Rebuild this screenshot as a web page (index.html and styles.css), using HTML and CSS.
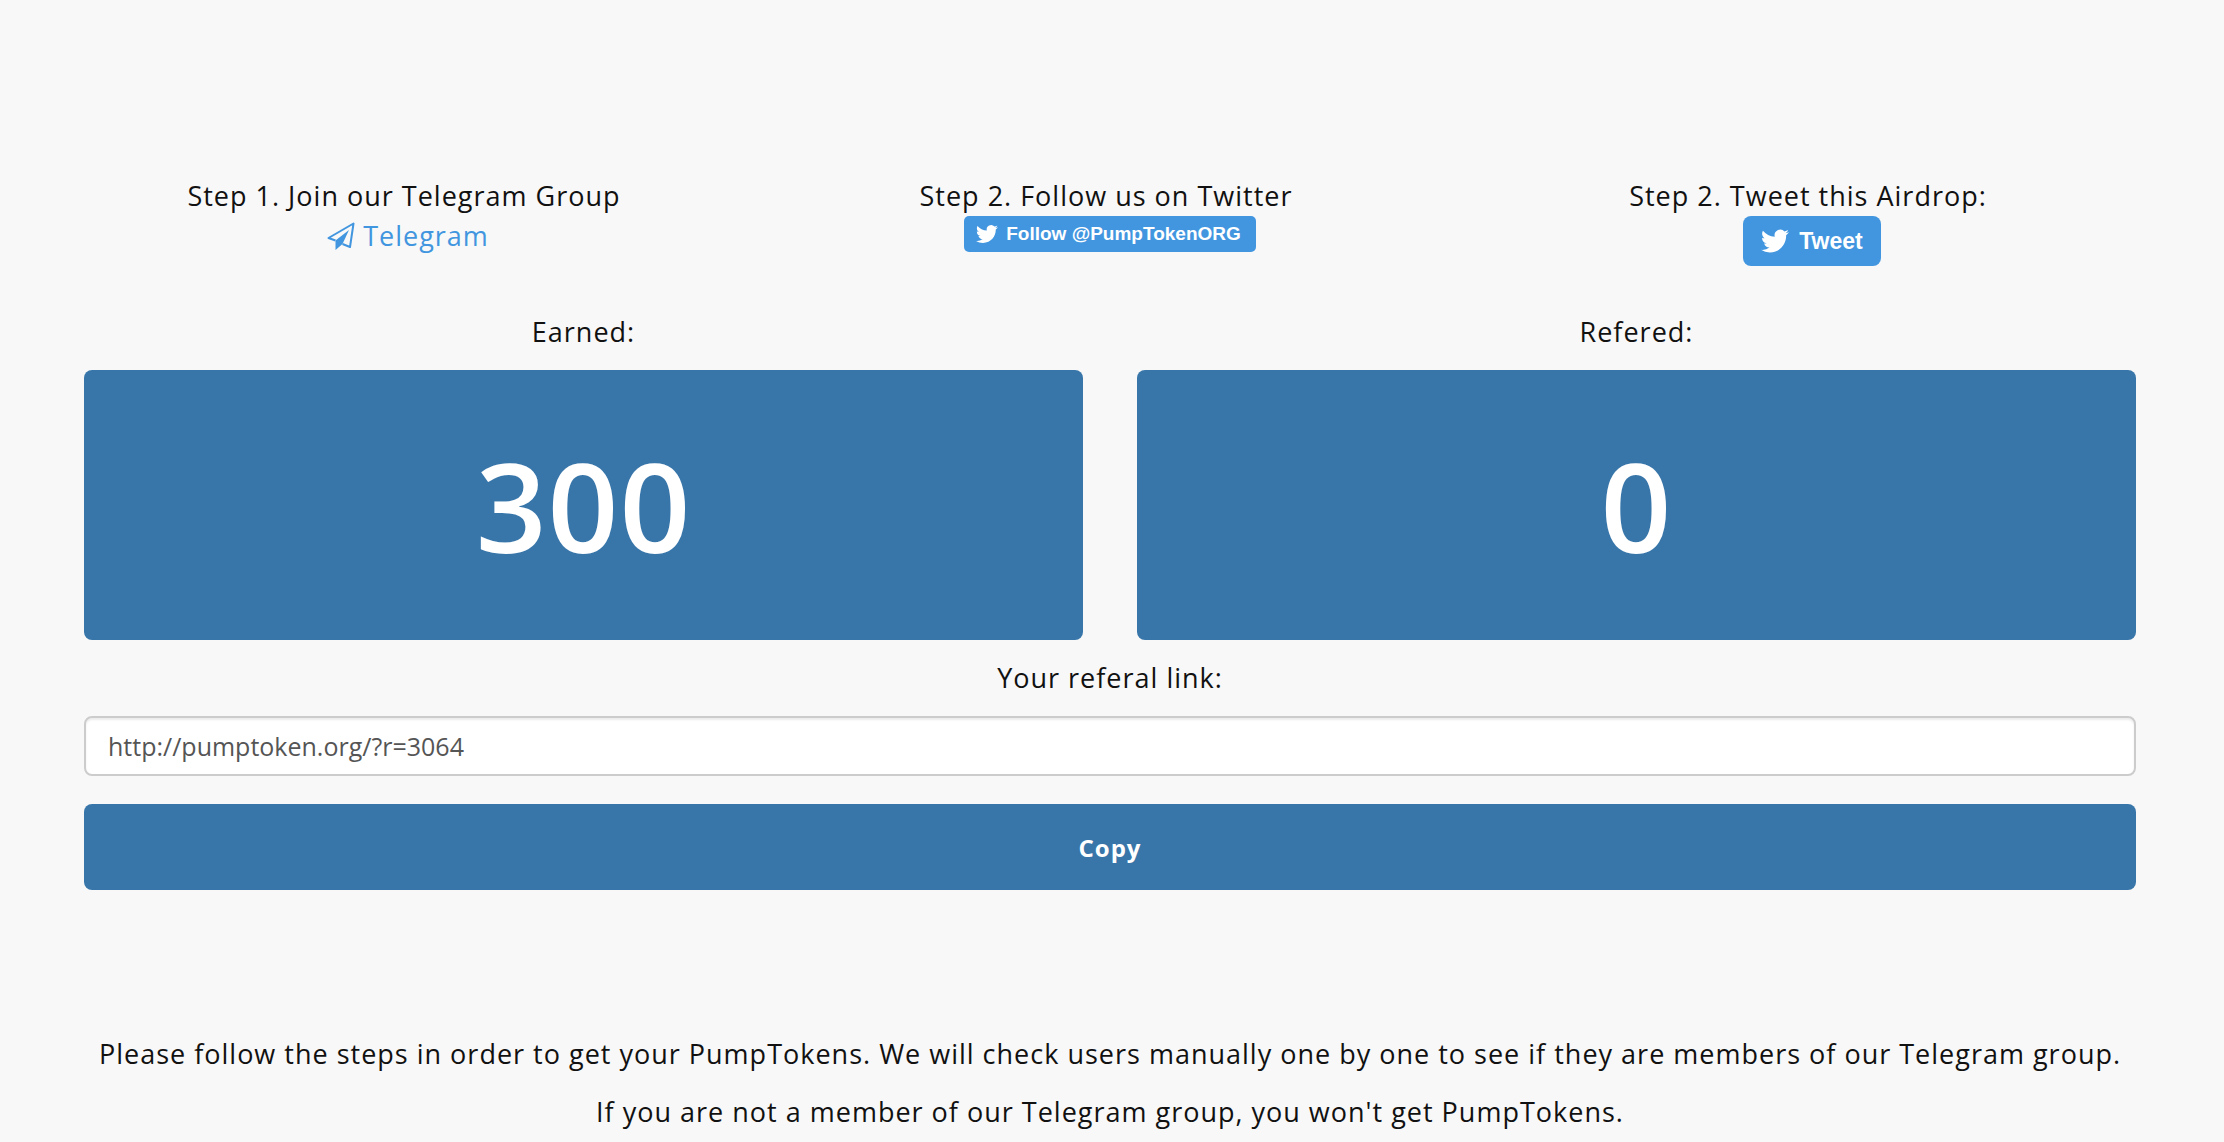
FILE: index.html
```html
<!DOCTYPE html>
<html lang="en">
<head>
    <meta charset="UTF-8">
    <meta name="viewport" content="width=device-width, initial-scale=1.0">
    <title>PumpToken Airdrop</title>
    <link rel="stylesheet" href="styles.css">
</head>
<body>
    <!-- Twitter bird, shared by both buttons -->
    <svg class="sprite" aria-hidden="true">
        <symbol id="bird" viewBox="0 0 24 24">
            <path d="M23.95 4.57a10 10 0 0 1-2.82.77 4.96 4.96 0 0 0 2.16-2.72c-.95.55-2 .96-3.13 1.18a4.92 4.92 0 0 0-8.38 4.48C7.69 8.1 4.07 6.13 1.64 3.16a4.82 4.82 0 0 0-.67 2.48c0 1.71.87 3.21 2.19 4.1a4.9 4.9 0 0 1-2.23-.62v.06a4.92 4.92 0 0 0 3.95 4.83 4.99 4.99 0 0 1-2.21.08 4.94 4.94 0 0 0 4.6 3.42A9.87 9.87 0 0 1 0 19.54a13.99 13.99 0 0 0 7.55 2.21c9.05 0 14-7.5 14-13.98 0-.21 0-.42-.02-.63a9.94 9.94 0 0 0 2.46-2.55z"/>
        </symbol>
    </svg>

    <main class="container">
        <div class="steps">
            <div class="step">
                <p class="step-title">Step 1. Join our Telegram Group</p>
                <a class="telegram-link" href="#">
                    <svg class="plane" viewBox="0 0 28 28" aria-hidden="true">
                        <path class="plane-outline" d="M8.500 18.500 1.500 16 26.500 1.500 23 25 15.500 22"/>
                        <path class="plane-fill" d="M22 8 8.500 18.500V28l7-6z"/>
                    </svg>
                    Telegram
                </a>
            </div>
            <div class="step">
                <p class="step-title">Step 2. Follow us on Twitter</p>
                <a class="twitter-btn" href="#">
                    <svg class="bird" viewBox="0 0 24 24" aria-hidden="true"><use href="#bird"/></svg>
                    Follow @PumpTokenORG
                </a>
            </div>
            <div class="step">
                <p class="step-title">Step 2. Tweet this Airdrop:</p>
                <a class="twitter-btn twitter-btn-large" href="#">
                    <svg class="bird" viewBox="0 0 24 24" aria-hidden="true"><use href="#bird"/></svg>
                    Tweet
                </a>
            </div>
        </div>

        <div class="stats">
            <div class="stat">
                <p>Earned:</p>
                <div class="stat-box">300</div>
            </div>
            <div class="stat">
                <p>Refered:</p>
                <div class="stat-box">0</div>
            </div>
        </div>

        <div class="referral">
            <label for="link">Your referal link:</label>
            <input type="text" id="link" value="http://pumptoken.org/?r=3064">
            <button type="button" id="copy">Copy</button>
        </div>

        <div class="notes">
            <p>Please follow the steps in order to get your PumpTokens. We will check users manually one by one to see if they are members of our Telegram group.</p>
            <p>If you are not a member of our Telegram group, you won't get PumpTokens.</p>
        </div>
    </main>

    <script>
        document.getElementById('copy').addEventListener('click', function () {
            document.getElementById('link').select();
            document.execCommand('copy');
        });
    </script>
</body>
</html>
```
FILE: styles.css
```css
:root {
    --primary: #3876aa;
    --twitter: #4296df;
    --background: #f8f8f8;
}

* {
    margin: 0;
    padding: 0;
    box-sizing: border-box;
}

body {
    font-family: "Open Sans", "Noto Sans", sans-serif;
    font-size: 27px;
    line-height: 40px;
    letter-spacing: 1px;
    color: #111111;
    background: var(--background);
    text-align: center;
}

.sprite {
    display: none;
}

.container {
    padding: 176px 88px 10px 84px;
}

.steps {
    display: grid;
    grid-template-columns: repeat(3, 1fr);
    gap: 54px;
    margin-bottom: 46px;
}

.step {
    display: flex;
    flex-direction: column;
    align-items: center;
}

.step-title {
    padding-right: 8px;
}

.telegram-link {
    display: flex;
    align-items: center;
    gap: 8px;
    color: var(--twitter);
    text-decoration: none;
}

.plane {
    width: 28px;
    height: 28px;
}

.plane-outline {
    fill: none;
    stroke: currentColor;
    stroke-width: 2;
    stroke-linejoin: round;
}

.plane-fill {
    fill: currentColor;
}

.twitter-btn {
    display: flex;
    align-items: center;
    gap: 8px;
    height: 36px;
    padding: 0 15px 0 12px;
    border-radius: 5px;
    background: var(--twitter);
    color: #ffffff;
    font-family: "Liberation Sans", Arial, sans-serif;
    font-size: 19px;
    font-weight: bold;
    letter-spacing: 0;
    text-decoration: none;
}

.bird {
    width: 22px;
    height: 22px;
    fill: currentColor;
}

.twitter-btn-large {
    gap: 10px;
    height: 50px;
    padding: 0 18px;
    border-radius: 8px;
    font-size: 23px;
}

.twitter-btn-large .bird {
    width: 28px;
    height: 28px;
}

.stats {
    display: grid;
    grid-template-columns: repeat(2, 1fr);
    gap: 54px;
    margin-bottom: 18px;
}

.stat-box {
    margin-top: 18px;
    padding: 45px 0;
    border-radius: 8px;
    background: var(--primary);
    color: #ffffff;
    font-size: 124px;
    font-weight: 600;
    line-height: 180px;
}

.referral label {
    display: block;
    margin-bottom: 18px;
}

.referral input {
    display: block;
    width: 100%;
    height: 60px;
    padding: 0 22px;
    border: 2px solid #cccccc;
    border-radius: 8px;
    background: #ffffff;
    box-shadow: inset 0 2px 2px rgba(0, 0, 0, 0.075);
    color: #555555;
    font-family: inherit;
    font-size: 25px;
}

.referral button {
    display: block;
    width: 100%;
    height: 86px;
    margin-top: 28px;
    border: 0;
    border-radius: 8px;
    background: var(--primary);
    color: #ffffff;
    font-family: inherit;
    font-size: 24px;
    font-weight: bold;
    letter-spacing: 1px;
    cursor: pointer;
}

.notes {
    margin-top: 144px;
}

.notes p + p {
    margin-top: 18px;
}

@media (max-width: 1200px) {
    .container {
        padding: 64px 32px;
    }

    .steps,
    .stats {
        grid-template-columns: 1fr;
    }
}
```
